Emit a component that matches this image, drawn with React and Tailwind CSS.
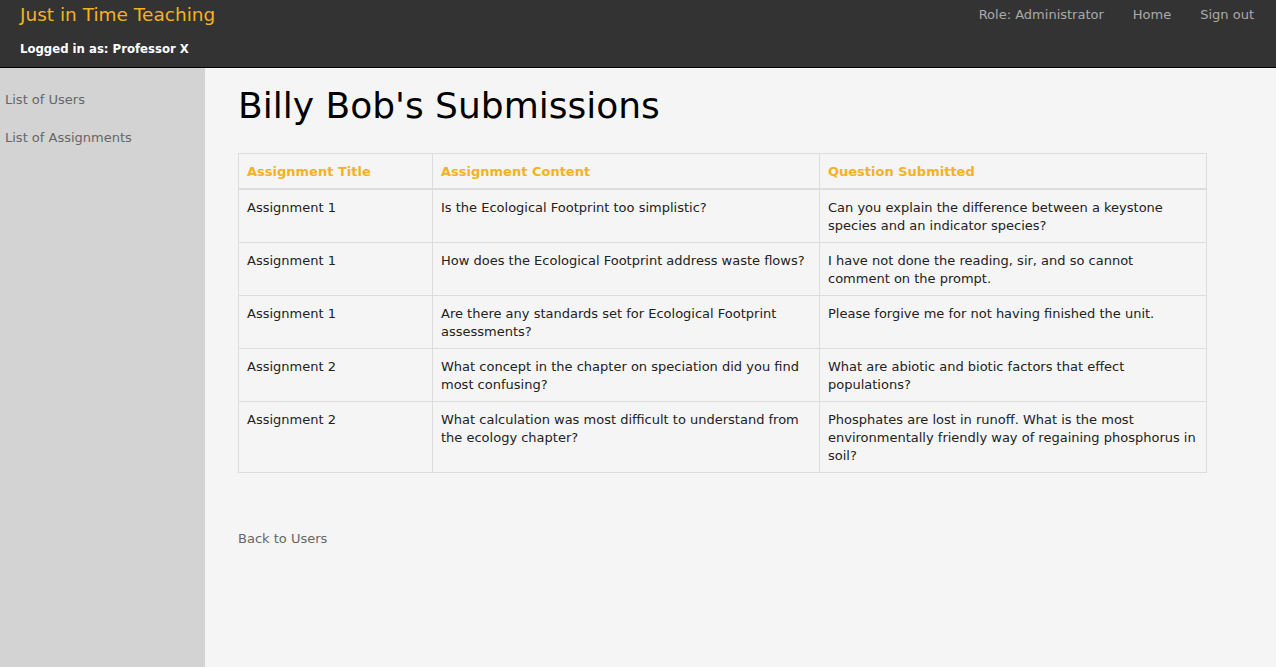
const ROWS = [
  ["Assignment 1", "Is the Ecological Footprint too simplistic?", "Can you explain the difference between a keystone species and an indicator species?"],
  ["Assignment 1", "How does the Ecological Footprint address waste flows?", "I have not done the reading, sir, and so cannot comment on the prompt."],
  ["Assignment 1", "Are there any standards set for Ecological Footprint assessments?", "Please forgive me for not having finished the unit."],
  ["Assignment 2", "What concept in the chapter on speciation did you find most confusing?", "What are abiotic and biotic factors that effect populations?"],
  ["Assignment 2", "What calculation was most difficult to understand from the ecology chapter?", "Phosphates are lost in runoff. What is the most environmentally friendly way of regaining phosphorus in soil?"],
];

export default function App() {
  return (
    <div className="min-h-screen flex flex-col bg-[#f5f5f5] text-[13px] text-[#222]" style={{ fontFamily: '"DejaVu Sans", Verdana, sans-serif' }}>
      <header className="h-[68px] shrink-0 bg-[#333333] border-b border-black flex justify-between pl-5 pr-[22px]">
        <div>
          <div className="pt-[3px] text-[18.5px] leading-[24px] text-[#f4b223]">Just in Time Teaching</div>
          <div className="mt-[13px] font-bold text-white leading-[18px]" style={{ fontFamily: '"DejaVu Sans Condensed", "DejaVu Sans", sans-serif' }}>Logged in as: Professor X</div>
        </div>
        <nav className="flex gap-[29px] pt-[6px] leading-[18px] text-[#aaaaaa]">
          <a href="#">Role: Administrator</a>
          <a href="#">Home</a>
          <a href="#">Sign out</a>
        </nav>
      </header>
      <div className="flex flex-1">
        <aside className="w-[205px] shrink-0 bg-[#d3d3d3] pt-[23px] px-[5px] text-[#666666]">
          <a href="#" className="block leading-[18px]">List of Users</a>
          <a href="#" className="block leading-[18px] mt-[20px]">List of Assignments</a>
        </aside>
        <main className="flex-1 pl-[33px] pr-[69px] pt-[16px] pb-10">
          <h1 className="text-[36px] leading-[44px] text-black">Billy Bob's Submissions</h1>
          <table className="w-full mt-[25px] border-collapse border border-[#dddddd]">
            <thead>
              <tr className="border-b-2 border-[#dddddd]">
                <th className="w-[194px] text-left px-2 pt-[9px] pb-[7px] leading-[18px] font-bold text-[#f4b223] border border-[#dddddd]">Assignment Title</th>
                <th className="w-[387px] text-left px-2 pt-[9px] pb-[7px] leading-[18px] font-bold text-[#f4b223] border border-[#dddddd]">Assignment Content</th>
                <th className="text-left px-2 pt-[9px] pb-[7px] leading-[18px] font-bold text-[#f4b223] border border-[#dddddd]">Question Submitted</th>
              </tr>
            </thead>
            <tbody>
              {ROWS.map((r, i) => (
                <tr key={i}>
                  {r.map((c, j) => (
                    <td key={j} className="align-top px-2 pt-[9px] pb-[7px] leading-[18px] border border-[#dddddd]">{c}</td>
                  ))}
                </tr>
              ))}
            </tbody>
          </table>
          <a href="#" className="block mt-[57px] text-[#666666] leading-[18px]">Back to Users</a>
        </main>
      </div>
    </div>
  );
}
